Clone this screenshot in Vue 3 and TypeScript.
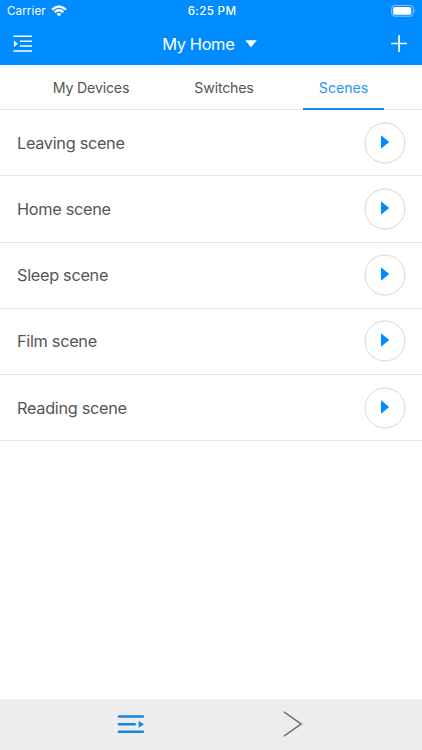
<script setup lang="ts">
import { ref } from 'vue'

const tabs = [
  { name: 'My Devices', kind: 'devices' },
  { name: 'Switches', kind: 'switches' },
  { name: 'Scenes', kind: 'scenes' },
]
const active = ref('Scenes')
const scenes = ['Leaving scene', 'Home scene', 'Sleep scene', 'Film scene', 'Reading scene']
</script>

<template>
  <div class="screen">
    <header class="header">
      <div class="status">
        <div class="carrier">
          <span class="carrier-name">Carrier</span>
          <svg class="wifi" width="16" height="12" viewBox="0 0 16 12">
            <g fill="none" stroke="#fff" stroke-width="2.3">
              <path d="M1.1 4.6Q8 -1.7 14.9 4.6" />
              <path d="M3.6 7.2Q8 3.3 12.4 7.2" />
            </g>
            <path d="M5.5 9Q8 7 10.5 9L8 11.5Z" fill="#fff" />
          </svg>
        </div>
        <span class="time">6:25 PM</span>
        <svg class="battery" width="26" height="13" viewBox="0 0 26 13">
          <rect x="0.7" y="0.4" width="21.6" height="10.8" rx="3" fill="none" stroke="#8cc9ff" stroke-width="1" />
          <rect x="2.2" y="1.9" width="18" height="7.8" rx="1.5" fill="#fff" />
          <path d="M23.7 4.1Q25.3 5.8 23.7 7.5Z" fill="#8cc9ff" />
        </svg>
      </div>
      <nav class="nav">
        <svg width="20" height="18" viewBox="0 0 20 18">
          <path d="M0.4 1.2H19M7 6.3H19M7 11H19M0.4 16H19" stroke="#fff" stroke-width="1.6" />
          <path d="M0.9 5.6V12L5 8.8Z" fill="#fff" />
        </svg>
        <button class="home">
          <span class="home-name">My Home</span>
          <svg width="12" height="8" viewBox="0 0 12 8"><path d="M0.2 0.2H11.8L6 7.3Z" fill="#fff" /></svg>
        </button>
        <svg width="18" height="18" viewBox="0 0 18 18">
          <path d="M1.2 8.5H17M9.1 0.3V17" stroke="#fff" stroke-width="1.7" />
        </svg>
      </nav>
    </header>
    <div class="tabs">
      <button
        v-for="tab in tabs"
        :key="tab.name"
        class="tab"
        :class="[tab.kind, { active: active === tab.name }]"
        @click="active = tab.name"
      >{{ tab.name }}</button>
    </div>
    <main class="list">
      <div v-for="scene in scenes" :key="scene" class="row">
        <span>{{ scene }}</span>
        <button class="play" :aria-label="scene">
          <svg width="42" height="42" viewBox="0 0 42 42">
            <circle cx="21" cy="21" r="20" fill="#fff" stroke="#d7d7d7" />
            <path d="M17 13.3V26.7L25.2 20Z" fill="#008cff" />
          </svg>
        </button>
      </div>
    </main>
    <footer class="bottom">
      <svg width="28" height="20" viewBox="0 0 28 20">
        <path d="M1.9 2.4H25.9M1.9 10.3H17.8M1.9 17.8H25.9" stroke="#1785e5" stroke-width="2.5" stroke-linecap="round" />
        <path d="M21.7 6.9V13.7L27 10.3Z" fill="#1785e5" />
      </svg>
      <svg width="20" height="28" viewBox="0 0 20 28">
        <path d="M1 1.9L18.2 14L1 26.2" fill="none" stroke="#77777a" stroke-width="1.6" />
      </svg>
    </footer>
  </div>
</template>

<style>
body {
  margin: 0;
}
</style>

<style scoped>
.screen {
  display: flex;
  flex-direction: column;
  height: 750px;
  overflow: hidden;
  background: #fff;
  color: #555;
  font-family: Inter, "Liberation Sans", sans-serif;
}
button {
  padding: 0;
  border: 0;
  background: none;
  color: inherit;
  font: inherit;
}
svg {
  display: block;
  flex: none;
}
.header {
  box-sizing: border-box;
  height: 65.4px;
  flex: none;
  background: #008cff;
  color: #fff;
}
.status {
  display: grid;
  grid-template-columns: 1fr auto 1fr;
  align-items: center;
  height: 22px;
  padding: 0 5px 0 7px;
}
.carrier {
  display: flex;
  align-items: center;
  gap: 5px;
}
.carrier-name {
  font-size: 11.6px;
  letter-spacing: 0.1px;
}
.time {
  font-size: 11.6px;
  font-weight: 500;
  letter-spacing: 0.35px;
}
.battery {
  justify-self: end;
}
.nav {
  display: flex;
  align-items: center;
  justify-content: space-between;
  height: 43px;
  padding: 0 14px 0 13px;
}
.home {
  display: flex;
  align-items: center;
  gap: 10.5px;
  margin-right: 4px;
}
.home-name {
  font-size: 16.4px;
  letter-spacing: -0.35px;
}
.tabs {
  box-sizing: border-box;
  display: flex;
  gap: 33px;
  height: 44.8px;
  flex: none;
  padding-left: 37px;
  border-bottom: 1px solid #e6e6e6;
}
.tab {
  box-sizing: border-box;
  margin-bottom: -1px;
  padding-top: 2px;
  border-bottom: 2px solid transparent;
  font-size: 14.2px;
  letter-spacing: -0.2px;
}
.devices {
  width: 108px;
}
.switches {
  width: 92px;
}
.scenes {
  width: 81px;
  letter-spacing: -0.05px;
}
.tab.active {
  border-color: #1688f0;
  color: #2996f4;
}
.list {
  flex: 1;
}
.row {
  box-sizing: border-box;
  display: flex;
  align-items: center;
  justify-content: space-between;
  height: 66.2px;
  padding: 0 16px 0 17px;
  border-bottom: 1px solid #e6e6e6;
  font-size: 16.3px;
  letter-spacing: -0.3px;
}
.bottom {
  box-sizing: border-box;
  display: flex;
  align-items: center;
  gap: 138px;
  height: 51px;
  padding: 0 0 1px 117px;
  background: #ededed;
}
</style>
